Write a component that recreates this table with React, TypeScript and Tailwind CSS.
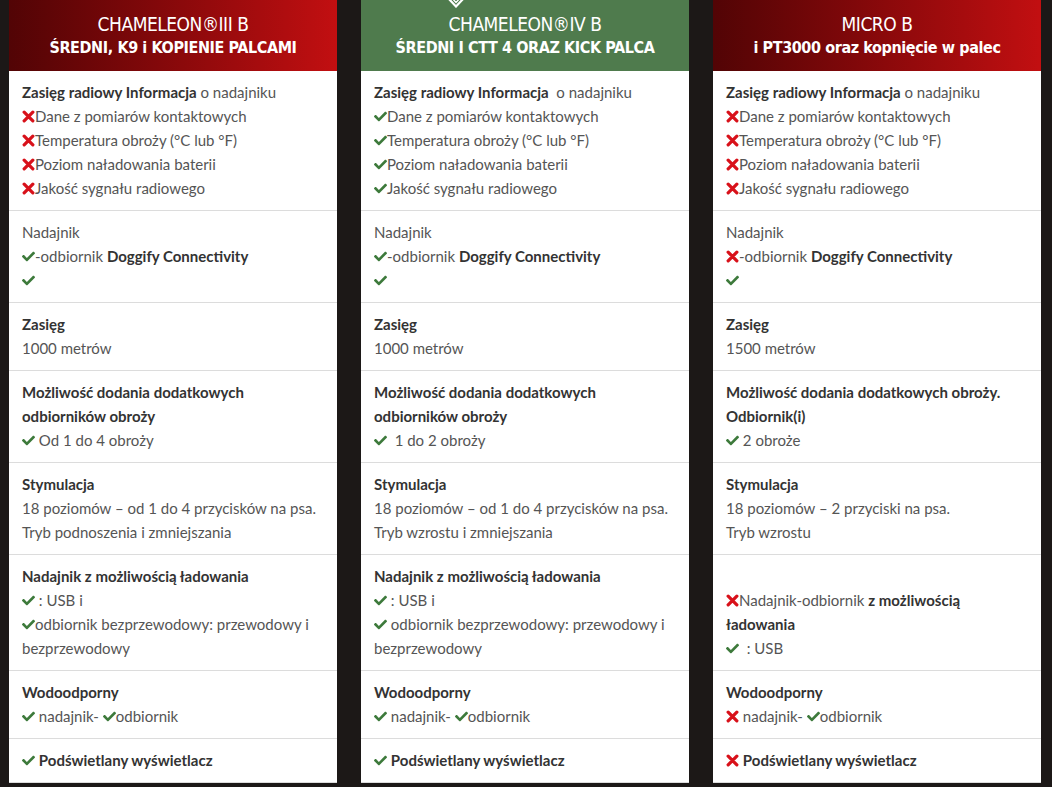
import React from 'react';
import { FaCheck } from 'react-icons/fa';

const Yes = () => (
  <FaCheck className="inline-block text-[#3d7a3b] w-[13px] h-[13px] align-[-1px]" />
);
const No = () => (
  <svg
    className="inline-block w-[13px] h-[13px] align-[-1px]"
    viewBox="0 0 12 12"
    stroke="#d8111a"
    strokeWidth="3"
    strokeLinecap="round"
  >
    <path d="M2 2 L10 10 M10 2 L2 10" />
  </svg>
);
const B = ({ children }: { children: React.ReactNode }) => (
  <strong className="font-bold text-[#333]">{children}</strong>
);

type Column = {
  title: string;
  subtitle: string;
  bg: string;
  badge?: boolean;
  rows: React.ReactNode[];
};

const columns: Column[] = [
  {
    title: 'CHAMELEON®III B',
    subtitle: 'ŚREDNI, K9 i KOPIENIE PALCAMI',
    bg: 'bg-gradient-to-r from-[#520405] to-[#c20f11]',
    rows: [
      <>
        <p><B>Zasięg radiowy Informacja</B> o nadajniku</p>
        <p><No />Dane z pomiarów kontaktowych</p>
        <p><No />Temperatura obroży (°C lub °F)</p>
        <p><No />Poziom naładowania baterii</p>
        <p><No />Jakość sygnału radiowego</p>
      </>,
      <>
        <p>Nadajnik</p>
        <p><Yes />-odbiornik <B>Doggify Connectivity</B></p>
        <p><Yes /></p>
      </>,
      <>
        <p><B>Zasięg</B></p>
        <p>1000 metrów</p>
      </>,
      <>
        <p><B>Możliwość dodania dodatkowych odbiorników obroży</B></p>
        <p><Yes /> Od 1 do 4 obroży</p>
      </>,
      <>
        <p><B>Stymulacja</B></p>
        <p>18 poziomów – od 1 do 4 przycisków na psa.</p>
        <p>Tryb podnoszenia i zmniejszania</p>
      </>,
      <>
        <p><B>Nadajnik z możliwością ładowania</B></p>
        <p><Yes /> : USB i</p>
        <p><Yes />odbiornik bezprzewodowy: przewodowy i bezprzewodowy</p>
      </>,
      <>
        <p><B>Wodoodporny</B></p>
        <p><Yes /> nadajnik- <Yes />odbiornik</p>
      </>,
      <p><Yes /> <B>Podświetlany wyświetlacz</B></p>,
    ],
  },
  {
    title: 'CHAMELEON®IV B',
    subtitle: 'ŚREDNI I CTT 4 ORAZ KICK PALCA',
    bg: 'bg-[#4f7b4d]',
    badge: true,
    rows: [
      <>
        <p><B>Zasięg radiowy Informacja</B>&nbsp; o nadajniku</p>
        <p><Yes />Dane z pomiarów kontaktowych</p>
        <p><Yes />Temperatura obroży (°C lub °F)</p>
        <p><Yes />Poziom naładowania baterii</p>
        <p><Yes />Jakość sygnału radiowego</p>
      </>,
      <>
        <p>Nadajnik</p>
        <p><Yes />-odbiornik <B>Doggify Connectivity</B></p>
        <p><Yes /></p>
      </>,
      <>
        <p><B>Zasięg</B></p>
        <p>1000 metrów</p>
      </>,
      <>
        <p><B>Możliwość dodania dodatkowych odbiorników obroży</B></p>
        <p><Yes />&nbsp; 1 do 2 obroży</p>
      </>,
      <>
        <p><B>Stymulacja</B></p>
        <p>18 poziomów – od 1 do 4 przycisków na psa.</p>
        <p>Tryb wzrostu i zmniejszania</p>
      </>,
      <>
        <p><B>Nadajnik z możliwością ładowania</B></p>
        <p><Yes /> : USB i</p>
        <p><Yes /> odbiornik bezprzewodowy: przewodowy i bezprzewodowy</p>
      </>,
      <>
        <p><B>Wodoodporny</B></p>
        <p><Yes /> nadajnik- <Yes />odbiornik</p>
      </>,
      <p><Yes /> <B>Podświetlany wyświetlacz</B></p>,
    ],
  },
  {
    title: 'MICRO B',
    subtitle: 'i PT3000 oraz kopnięcie w palec',
    bg: 'bg-gradient-to-r from-[#520405] to-[#c20f11]',
    rows: [
      <>
        <p><B>Zasięg radiowy Informacja</B> o nadajniku</p>
        <p><No />Dane z pomiarów kontaktowych</p>
        <p><No />Temperatura obroży (°C lub °F)</p>
        <p><No />Poziom naładowania baterii</p>
        <p><No />Jakość sygnału radiowego</p>
      </>,
      <>
        <p>Nadajnik</p>
        <p><No />-odbiornik <B>Doggify Connectivity</B></p>
        <p><Yes /></p>
      </>,
      <>
        <p><B>Zasięg</B></p>
        <p>1500 metrów</p>
      </>,
      <>
        <p><B>Możliwość dodania dodatkowych obroży. Odbiornik(i)</B></p>
        <p><Yes /> 2 obroże</p>
      </>,
      <>
        <p><B>Stymulacja</B></p>
        <p>18 poziomów – 2 przyciski na psa.</p>
        <p>Tryb wzrostu</p>
      </>,
      <>
        <p>&nbsp;</p>
        <p><No />Nadajnik-odbiornik <B>z możliwością ładowania</B></p>
        <p><Yes />&nbsp; : USB</p>
      </>,
      <>
        <p><B>Wodoodporny</B></p>
        <p><No /> nadajnik- <Yes />odbiornik</p>
      </>,
      <p><No /> <B>Podświetlany wyświetlacz</B></p>,
    ],
  },
];

export default function App() {
  return (
    <div className="min-h-[787px] w-full bg-[#1c1817] overflow-hidden pl-[9px]">
      <div className="grid grid-cols-[328px_328px_328px] grid-rows-[repeat(9,auto)] grid-flow-col gap-x-6">
        {columns.map((col) => (
          <React.Fragment key={col.title}>
            <div
              className={`relative h-[71px] flex flex-col items-center justify-center text-white leading-6 ${col.bg}`}
              style={{ fontFamily: '"DejaVu Sans Condensed", Roboto, sans-serif' }}
            >
              {col.badge && (
                <svg
                  className="absolute top-0 left-[86px] w-[18px] h-[8px]"
                  viewBox="0 0 18 8"
                  fill="none"
                  stroke="white"
                  strokeWidth="2.2"
                >
                  <path d="M1 -2 L9 6.5 L17 -2" />
                  <path d="M5 -2 L9 2.5 L13 -2" strokeWidth="1.4" />
                </svg>
              )}
              <div className="font-light text-[19px] tracking-tight">{col.title}</div>
              <div className="font-bold text-[16px] tracking-[-0.4px]">{col.subtitle}</div>
            </div>
            {col.rows.map((row, i) => (
              <div
                key={i}
                className="bg-white px-[13px] pt-[9px] pb-[10px] border-b border-[#dcdcdc] text-[15px] leading-6 text-[#555]"
                style={{ fontFamily: 'Lato, "Noto Sans", sans-serif' }}
              >
                {row}
              </div>
            ))}
          </React.Fragment>
        ))}
      </div>
    </div>
  );
}
